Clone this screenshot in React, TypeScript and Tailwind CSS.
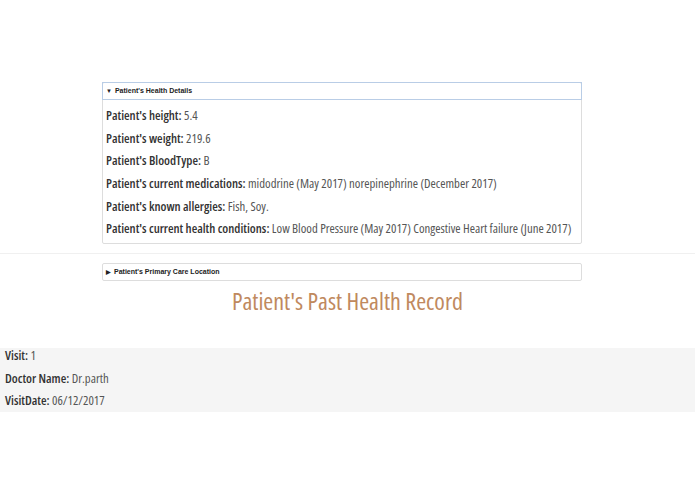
import React from "react";

const healthRows = [
    ["Patient's height:", "5.4"],
    ["Patient's weight:", "219.6"],
    ["Patient's BloodType:", "B"],
    ["Patient's current medications:", "midodrine (May 2017) norepinephrine (December 2017)"],
    ["Patient's known allergies:", "Fish, Soy."],
    ["Patient's current health conditions:", "Low Blood Pressure (May 2017) Congestive Heart failure (June 2017)"],
];

const visitRows = [
    ["Visit:", "1"],
    ["Doctor Name:", "Dr.parth"],
    ["VisitDate:", "06/12/2017"],
];

export default function App() {
    return (
        <div className="min-h-[494px] bg-white pt-[82px] font-['Open_Sans',sans-serif] [font-stretch:semi-condensed] text-[#555]">
            {/* Health details (open) */}
            <div className="ml-[102px] w-[480px] rounded-[2px] border border-[#dddddd]">
                <div className="-m-px flex h-[18px] items-center border border-[#b9cde6] px-[3px] font-['Liberation_Sans',sans-serif] [font-stretch:normal] text-[7px] font-bold text-[#222]">
                    <span className="mr-[3px] text-[6px]">▼</span>
                    Patient's Health Details
                </div>
                <div className="px-[3px] pt-[5px] pb-[3px]">
                    {healthRows.map(([label, value]) => (
                        <p key={label} className="h-[22.7px] text-[12.75px] leading-[22.7px]">
                            <span className="font-semibold text-[#333]">{label}</span> {value}
                        </p>
                    ))}
                </div>
            </div>

            <hr className="mt-[9px] border-t border-[#f0f0f0]" />

            {/* Primary care location (closed) */}
            <div className="mt-[9px] ml-[102px] flex h-[18px] w-[480px] items-center rounded-[2px] border border-[#dddddd] px-[3px] font-['Liberation_Sans',sans-serif] [font-stretch:normal] text-[7px] font-bold text-[#222]">
                <span className="mr-[3px] text-[6px]">▶</span>
                Patient's Primary Care Location
            </div>

            <h2 className="mt-[6px] text-center text-[24px] leading-[28px] text-[#c0895e]">Patient's Past Health Record</h2>

            {/* Visit history */}
            <div className="mt-[33px] flex flex-col gap-[8.5px] bg-[#f5f5f5] px-[5px] pb-[5px]">
                {visitRows.map(([label, value]) => (
                    <p key={label} className="text-[12.75px] leading-[14px]">
                        <span className="font-semibold text-[#333]">{label}</span> {value}
                    </p>
                ))}
            </div>
        </div>
    );
}
